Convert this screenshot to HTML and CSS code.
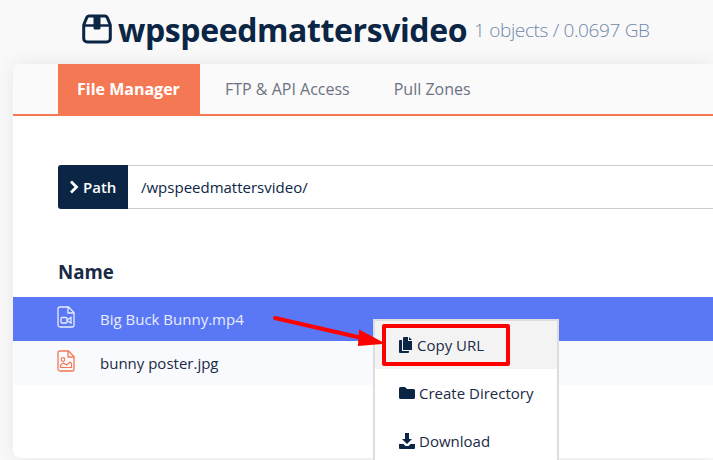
FILE: index.html
```html
<!DOCTYPE html>
<html lang="en">
<head>
  <meta charset="UTF-8" />
  <title>wpspeedmattersvideo – Storage</title>
  <link rel="stylesheet" href="styles.css">
</head>
<body>

<div class="zone-header">
  <svg class="zone-icon" viewBox="0 0 30 30" width="30" height="30">
    <path d="M7 2h16a2.500 2.500 0 0 1 2.300 1.600L28.300 11v13.500a3.500 3.500 0 0 1-3.500 3.500H5.200a3.500 3.500 0 0 1-3.500-3.500V11l3-7.400A2.500 2.500 0 0 1 7 2z" fill="none" stroke="#0b2545" stroke-width="3"/>
    <path d="M2 11.500h26" stroke="#0b2545" stroke-width="2.500"/>
    <path d="M11.500 2h7v12a1.500 1.500 0 0 1-1.500 1.500h-4a1.500 1.500 0 0 1-1.500-1.500z" fill="#0b2545"/>
  </svg>
  <h1>wpspeedmattersvideo</h1>
  <span class="zone-stats">1 objects / 0.0697 GB</span>
</div>

<div class="card">
  <div class="tabs">
    <a class="tab active">File Manager</a>
    <a class="tab">FTP &amp; API Access</a>
    <a class="tab">Pull Zones</a>
  </div>

  <div class="path-bar">
    <div class="path-label">
      <svg viewBox="0 0 10 14" width="10" height="14"><path d="M2 1.500l5.500 5.500-5.500 5.500" fill="none" stroke="#fff" stroke-width="2.800"/></svg>
      Path
    </div>
    <div class="path-value">/wpspeedmattersvideo/</div>
  </div>

  <div class="list-head">Name</div>

  <div class="file-row selected">
    <svg class="file-icon" viewBox="0 0 18 22" width="18" height="22">
      <path d="M3 1h8.500L17 6.500V19a2 2 0 0 1-2 2H3a2 2 0 0 1-2-2V3a2 2 0 0 1 2-2z" fill="none" stroke="currentColor" stroke-width="1.300"/>
      <path d="M11 1v6h6" fill="none" stroke="currentColor" stroke-width="1.300"/>
      <rect x="4" y="11.500" width="6" height="5.500" rx="1" fill="none" stroke="currentColor" stroke-width="1.300"/>
      <path d="M10 14l4-2.500v5.500l-4-2.500" fill="none" stroke="currentColor" stroke-width="1.300"/>
    </svg>
    <span>Big Buck Bunny.mp4</span>
  </div>
  <div class="file-row alt">
    <svg class="file-icon orange" viewBox="0 0 18 22" width="18" height="22">
      <path d="M3 1h8.500L17 6.500V19a2 2 0 0 1-2 2H3a2 2 0 0 1-2-2V3a2 2 0 0 1 2-2z" fill="none" stroke="currentColor" stroke-width="1.300"/>
      <path d="M11 1v6h6" fill="none" stroke="currentColor" stroke-width="1.300"/>
      <circle cx="6" cy="9.500" r="1.800" fill="none" stroke="currentColor" stroke-width="1.200"/>
      <path d="M3.500 17.500v-2.500l3-2 3 2 3.500-3 1.500 1.500v4z" fill="none" stroke="currentColor" stroke-width="1.200"/>
    </svg>
    <span>bunny poster.jpg</span>
  </div>
</div>

<div class="context-menu">
  <div class="menu-item hover">
    <svg viewBox="0 0 14 16" width="14" height="16"><path d="M5 0h4v4h4v8.500a.500.500 0 0 1-.500.500H4.500a.500.500 0 0 1-.500-.500V1a1 1 0 0 1 1-1z" fill="#0b2545"/><path d="M10 0l3 3h-3z" fill="#0b2545"/><path d="M3 3v10.500a.500.500 0 0 0 .500.500H10v1a1 1 0 0 1-1 1H1a1 1 0 0 1-1-1V4a1 1 0 0 1 1-1z" fill="#0b2545"/></svg>
    Copy URL
  </div>
  <div class="menu-item">
    <svg viewBox="0 0 16 14" width="16" height="14"><path d="M1.500 1h4.500l2 2h6.500A1.500 1.500 0 0 1 16 4.500v7a1.500 1.500 0 0 1-1.500 1.500h-13A1.500 1.500 0 0 1 0 11.500v-9A1.500 1.500 0 0 1 1.500 1z" fill="#0b2545"/></svg>
    Create Directory
  </div>
  <div class="menu-item">
    <svg viewBox="0 0 16 16" width="16" height="16"><path d="M6 0h4v6h3l-5 5-5-5h3z" fill="#0b2545"/><path d="M0 11h4.500l2 2h3l2-2H16v4a1 1 0 0 1-1 1H1a1 1 0 0 1-1-1z" fill="#0b2545"/></svg>
    Download
  </div>
</div>

<!-- annotation drawn on top of the screenshot -->
<div class="highlight-box"></div>
<svg class="arrow" viewBox="0 0 713 460" width="713" height="460">
  <path d="M275 318L362 338" stroke="#f00" stroke-width="4" stroke-linecap="round"/>
  <path d="M382 343L360 331L359 345z" fill="#f00" stroke="#f00" stroke-width="2"/>
</svg>

</body>
</html>
```

FILE: styles.css
```css
html, body {
  height: 100%;
}
body {
  margin: 0;
  width: 713px;
  height: 460px;
  overflow: hidden;
  position: relative;
  font-family: 'Open Sans', sans-serif;
  background: #f9f9f9;
  color: #0b2545;
}
.zone-header {
  display: flex;
  align-items: center;
  height: 58px;
  padding-left: 82px;
  white-space: nowrap;
}
.zone-icon {
  margin-right: 6px;
}
.zone-header h1 {
  margin: 0;
  font-size: 32px;
  font-weight: 700;
  letter-spacing: -0.4px;
  color: #0b2545;
}
.zone-stats {
  margin-left: 7px;
  margin-top: 2px;
  font-size: 19px;
  font-weight: 300;
  letter-spacing: -0.35px;
  color: #7088aa;
}
.card {
  width: 700px;
  height: 394px;
  margin: 6px 0 0 13px;
  background: #fff;
  border-radius: 8px 0 0 8px;
  box-shadow: 0 0 20px rgba(0,0,0,0.08);
}
.tabs {
  display: flex;
  height: 50px;
  padding-left: 45px;
  background: #fafafa;
  border-bottom: 2px solid #f57855;
  border-radius: 8px 0 0 0;
}
.tab {
  display: flex;
  align-items: center;
  padding: 0 22px;
  font-size: 16px;
  color: #6c7282;
}
.tab.active {
  width: 142px;
  box-sizing: border-box;
  padding: 0 19px;
  margin-right: 3px;
  background: #f57855;
  color: #fff;
  font-weight: 700;
}
.path-bar {
  display: flex;
  height: 44px;
  margin: 49px 0 0 45px;
}
.path-label {
  display: flex;
  align-items: center;
  gap: 4px;
  width: 70px;
  box-sizing: border-box;
  padding-left: 11px;
  background: #0b2545;
  color: #fff;
  font-size: 15px;
  font-weight: 600;
  border-radius: 3px 0 0 3px;
}
.path-value {
  flex: 1;
  display: flex;
  align-items: center;
  padding-left: 13px;
  font-size: 15px;
  border-top: 1px solid #ccc;
  border-bottom: 1px solid #ccc;
}
.list-head {
  margin: 49px 0 0 45px;
  height: 39px;
  line-height: 28px;
  font-size: 18.7px;
  font-weight: 700;
  color: #1a2b45;
}
.file-row {
  display: flex;
  align-items: center;
  height: 44px;
  padding-left: 44px;
  font-size: 15px;
  color: #1a2b45;
}
.file-row.selected {
  background: #5a78f5;
  color: #e8edff;
}
.file-row.alt {
  background: #f9fafd;
}
.file-icon {
  margin-right: 25px;
  margin-top: -5px;
}
.file-icon.orange {
  color: #f57855;
}
.context-menu {
  position: absolute;
  left: 373px;
  top: 319px;
  width: 186px;
  height: 141px;
  overflow: hidden;
  box-sizing: border-box;
  border: 2px solid #ddd;
  border-bottom: 0;
  background: #fff;
}
.menu-item {
  display: flex;
  align-items: center;
  gap: 4px;
  height: 48px;
  padding-left: 24px;
  font-size: 15px;
  color: #1a2b45;
}
.menu-item.hover {
  background: #f3f3f3;
}
.highlight-box {
  position: absolute;
  left: 382px;
  top: 324px;
  width: 128px;
  height: 42px;
  box-sizing: border-box;
  border: 4px solid #f00;
  border-radius: 2px;
}
.arrow {
  position: absolute;
  left: 0;
  top: 0;
}
```
